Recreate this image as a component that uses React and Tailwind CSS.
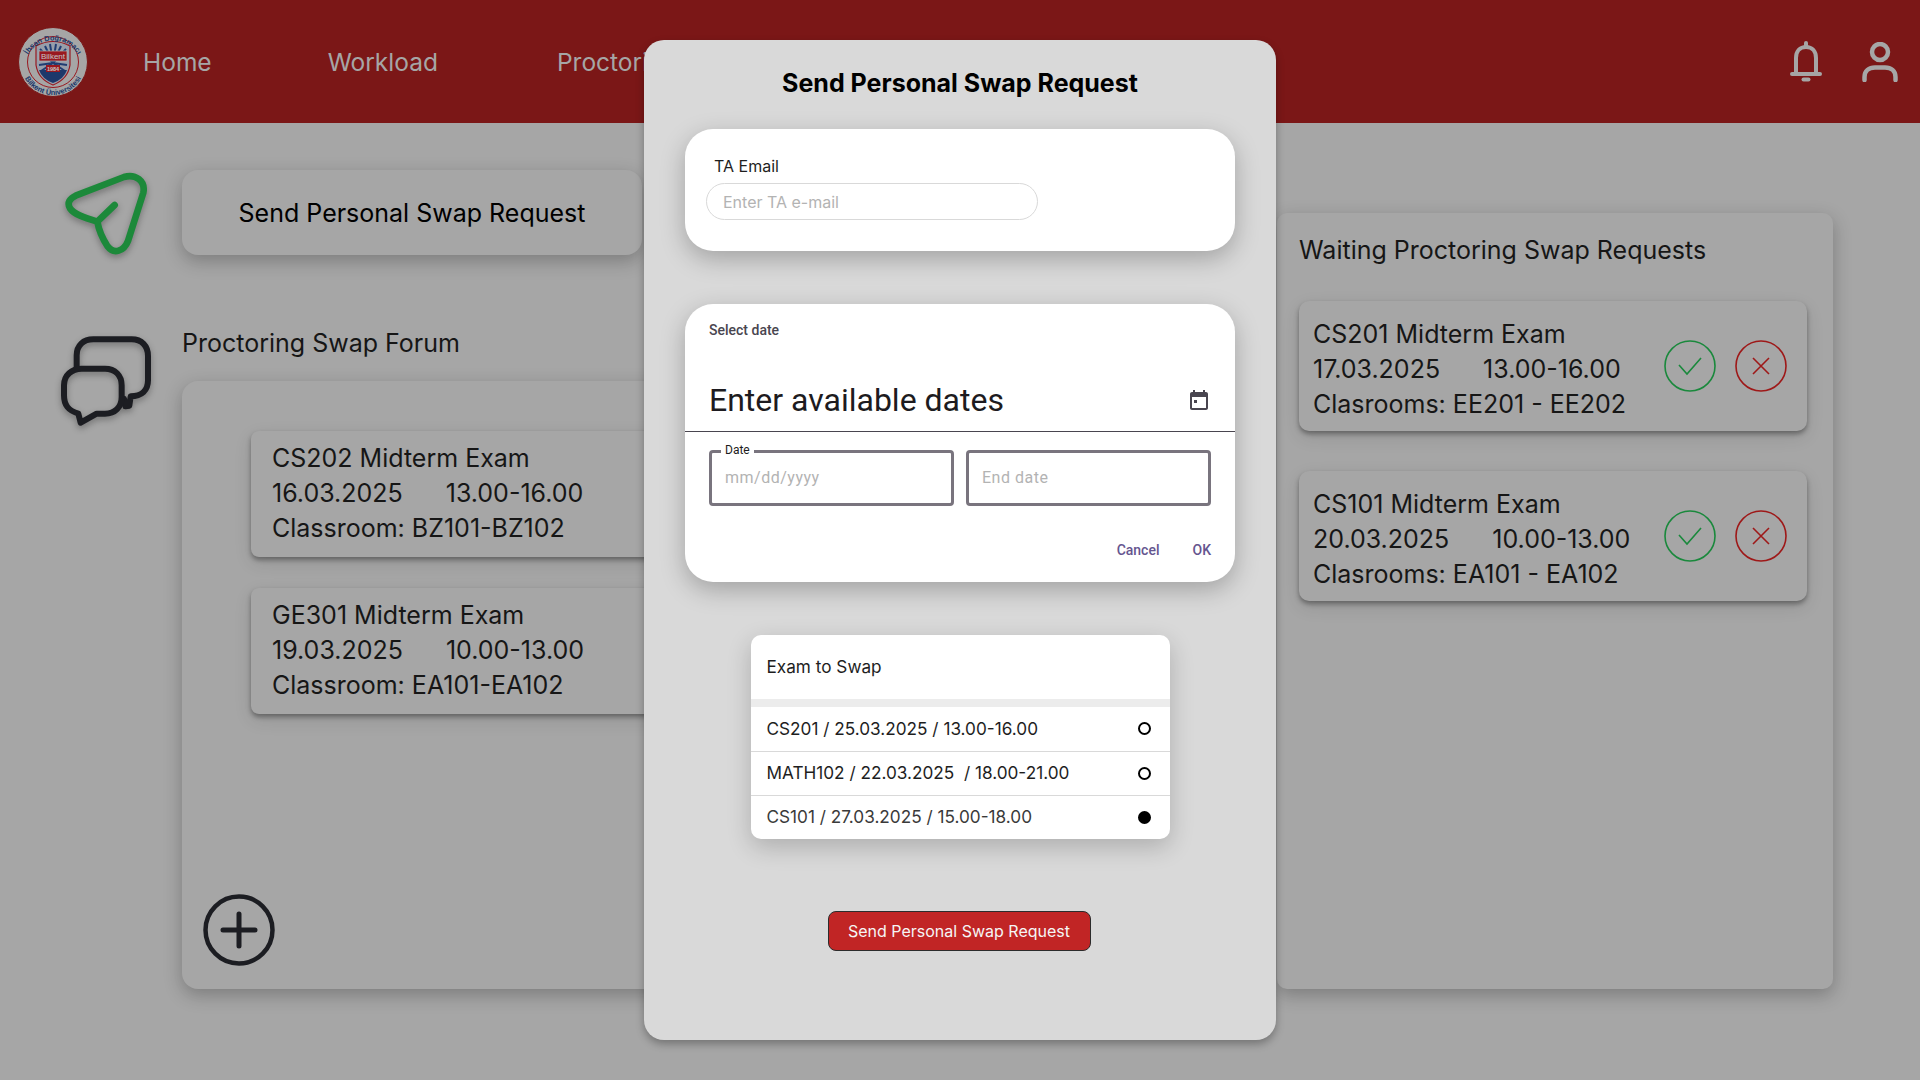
import React from "react";

const forumItems = [
  { title: "CS202 Midterm Exam", date: "16.03.2025", time: "13.00-16.00", room: "Classroom: BZ101-BZ102" },
  { title: "GE301 Midterm Exam", date: "19.03.2025", time: "10.00-13.00", room: "Classroom: EA101-EA102" },
];

const waitingItems = [
  { title: "CS201 Midterm Exam", date: "17.03.2025", time: "13.00-16.00", room: "Clasrooms: EE201 - EE202" },
  { title: "CS101 Midterm Exam", date: "20.03.2025", time: "10.00-13.00", room: "Clasrooms: EA101 - EA102" },
];

const exams = [
  { label: "CS201 / 25.03.2025 / 13.00-16.00", selected: false },
  { label: "MATH102 / 22.03.2025  / 18.00-21.00", selected: false },
  { label: "CS101 / 27.03.2025 / 15.00-18.00", selected: true },
];

const Logo = () => (
  <svg width="70" height="70" viewBox="0 0 70 70">
    <defs>
      <path id="logoTop" d="M6.5 38 A28.8 28.8 0 0 1 63.5 38" />
      <path id="logoBottom" d="M3 36 A32 32 0 0 0 67 36" />
    </defs>
    <circle cx="35" cy="35" r="34.5" fill="#d9d9d9" stroke="#a11f1f" strokeWidth="1" />
    <circle cx="35" cy="35" r="25.5" fill="#d9d9d9" stroke="#c8202a" strokeWidth="1" />
    <path d="M18 19 Q35 10 52 19 V38 Q50 52 35 58 Q20 52 18 38 Z" fill="#c6cfdf" stroke="#c8202a" strokeWidth="1.2" />
    <path d="M22 22 L35 36 M27 19 L35 36 M32 17 L35 36 M38 17 L35 36 M43 19 L35 36 M48 22 L35 36 M21 38 L35 36 M49 38 L35 36 M23 44 L35 36 M47 44 L35 36" stroke="#2a4f96" strokeWidth="2" />
    <path d="M21 43 H49 Q46 52 35 56 Q24 52 21 43 Z" fill="#264a8c" />
    <rect x="21" y="24" width="28" height="10" fill="#c8202a" stroke="#e6e6e6" strokeWidth="0.7" />
    <text x="35" y="32" textAnchor="middle" fontSize="8" fontFamily="Liberation Sans, sans-serif" fill="#ffffff">Bilkent</text>
    <rect x="28" y="38" width="14" height="7" fill="#c8202a" />
    <text x="35" y="44" textAnchor="middle" fontSize="5.5" fontWeight="700" fontFamily="Liberation Sans, sans-serif" fill="#ffffff">1984</text>
    <text fontSize="7.4" fontWeight="700" fontFamily="Liberation Sans, sans-serif" fill="#264a8c">
      <textPath href="#logoTop" startOffset="50%" textAnchor="middle">İhsan Doğramacı</textPath>
    </text>
    <text fontSize="7.4" fontWeight="700" fontFamily="Liberation Sans, sans-serif" fill="#264a8c">
      <textPath href="#logoBottom" startOffset="50%" textAnchor="middle">Bilkent Üniversitesi</textPath>
    </text>
  </svg>
);

const BellIcon = () => (
  <svg width="32" height="41" viewBox="0 0 32 41" fill="none" stroke="#d9d9d9" strokeWidth="4" strokeLinecap="round">
    <path d="M6 33 V17 C6 10 10 6 16 6 C22 6 26 10 26 17 V33" />
    <path d="M2 33 H30" />
    <path d="M16 2 V5" />
    <path d="M13.5 38.5 H18.5" />
  </svg>
);

const UserIcon = () => (
  <svg width="36" height="40" viewBox="0 0 36 40" fill="none" stroke="#d9d9d9" strokeWidth="4.5" strokeLinecap="round">
    <circle cx="18" cy="10" r="8" />
    <path d="M2.5 38 V35 C2.5 29 7 25.5 13 25.5 H23 C29 25.5 33.5 29 33.5 35 V38" />
  </svg>
);

const SendIcon = () => (
  <svg width="85" height="85" viewBox="70 60 255 255" fill="none" stroke="#25b34c" strokeWidth="20" strokeLinecap="round" strokeLinejoin="round" className="drop-shadow-[0_3px_3px_rgba(0,0,0,0.3)]">
    <path d="M170 212 C130 200 100 190 88 172 C78 155 88 142 105 134 L250 78 C285 68 315 90 308 125 L262 270 C250 300 220 312 200 285 C185 262 175 240 170 212 Z" />
    <path d="M170 212 L222 162" />
  </svg>
);

const ChatIcon = () => (
  <svg width="90" height="90" viewBox="63 557 270 270" fill="none" stroke="#25262d" strokeWidth="18" strokeLinecap="round" strokeLinejoin="round" className="drop-shadow-[0_3px_3px_rgba(0,0,0,0.3)]">
    <path d="M110 650 V615 C110 585 130 567 160 567 H275 C305 567 324 587 324 617 V690 C324 720 305 738 272 738 L268 766 L256 768 L252 745" />
    <path d="M125 655 H195 C225 655 245 675 245 705 V740 C245 770 225 790 195 790 H170 L122 817 L115 790 C85 780 72 765 72 735 V705 C72 675 95 655 125 655 Z" />
  </svg>
);

const PlusIcon = () => (
  <svg width="72" height="72" viewBox="0 0 72 72" fill="none" stroke="#25262d" strokeLinecap="round">
    <circle cx="36" cy="36" r="33.5" strokeWidth="4.5" />
    <path d="M20 36 H52 M36 20 V52" strokeWidth="5" />
  </svg>
);

const CheckButton = () => (
  <svg width="52" height="52" viewBox="0 0 52 52" fill="none" stroke="#22b34f" strokeWidth="1.6">
    <circle cx="26" cy="26" r="25" />
    <path d="M15 25 L23 34 L37 18" />
  </svg>
);

const CrossButton = () => (
  <svg width="52" height="52" viewBox="0 0 52 52" fill="none" stroke="#cf2020" strokeWidth="1.6">
    <circle cx="26" cy="26" r="25" />
    <path d="M18 18 L34 34 M34 18 L18 34" />
  </svg>
);

const CalendarIcon = () => (
  <svg width="24" height="24" viewBox="0 0 24 24" fill="#49454f" className="mt-[2px]">
    <path d="M19 3h-1V1h-2v2H8V1H6v2H5c-1.11 0-1.99.9-1.99 2L3 19c0 1.1.89 2 2 2h14c1.1 0 2-.9 2-2V5c0-1.1-.9-2-2-2zm0 16H5V8h14v11zM7 11h3v3H7z" />
  </svg>
);

const ExamLines = ({ item }) => (
  <div className="text-[25px] leading-[35px] text-[#1e1e1e]">
    <div>{item.title}</div>
    <div className="flex gap-[43px]">
      <span>{item.date}</span>
      <span>{item.time}</span>
    </div>
    <div>{item.room}</div>
  </div>
);

const Background = () => (
  <div className="flex flex-col h-[1080px]">
    {/* Top bar */}
    <header className="flex items-center h-[123px] bg-[#a11f1f] pl-[18px] pr-[22px] shrink-0 text-[24.5px] text-[#d9d9d9]">
      <Logo />
      <nav className="flex gap-[116px] ml-[55px] pt-[2px]">
        <span>Home</span>
        <span>Workload</span>
        <span className="ml-[3px]">Proctoring</span>
      </nav>
      <div className="flex items-center gap-[40px] ml-auto">
        <BellIcon />
        <UserIcon />
      </div>
    </header>

    <main className="flex justify-between pl-[61px] pr-[87px] flex-1">
      <div className="flex flex-col">
        {/* Send personal swap */}
        <div className="flex mt-[47px]">
          <div className="w-[121px] pl-[3px] pt-[1px]">
            <SendIcon />
          </div>
          <div className="flex items-center justify-center w-[460px] h-[85px] pt-[2px] rounded-[16px] bg-[#d9d9d9] shadow-[0_6px_18px_rgba(0,0,0,0.25)] text-[25px] text-black">
            Send Personal Swap Request
          </div>
        </div>

        {/* Forum */}
        <div className="flex mt-[72px]">
          <div className="w-[121px] pt-[8px]">
            <ChatIcon />
          </div>
          <div className="flex flex-col">
            <div className="h-[30px] text-[25px] leading-[30px] text-[#1e1e1e]">Proctoring Swap Forum</div>
            <div className="flex flex-col w-[520px] h-[608px] mt-[23px] pl-[69px] pt-[50px] rounded-[16px] bg-[#d9d9d9] shadow-[0_6px_18px_rgba(0,0,0,0.25)]">
              <div className="flex flex-col gap-[31px]">
                {forumItems.map((item) => (
                  <div key={item.title} className="w-[420px] h-[126px] pl-[21px] pt-[10px] rounded-[8px] bg-[#d9d9d9] shadow-[0_3px_5px_rgba(0,0,0,0.35),0_6px_18px_rgba(0,0,0,0.1)]">
                    <ExamLines item={item} />
                  </div>
                ))}
              </div>
              <div className="mt-auto mb-[23px] ml-[-48px]">
                <PlusIcon />
              </div>
            </div>
          </div>
        </div>
      </div>

      {/* Waiting requests */}
      <aside className="flex flex-col w-[556px] h-[776px] mt-[90px] pl-[22px] rounded-[10px] bg-[#d9d9d9] shadow-[0_6px_18px_rgba(0,0,0,0.25)]">
        <div className="mt-[22px] h-[30px] text-[25px] leading-[30px] text-[#1e1e1e]">Waiting Proctoring Swap Requests</div>
        <div className="flex flex-col gap-[40px] mt-[36px]">
          {waitingItems.map((item) => (
            <div key={item.title} className="flex items-center w-[508px] h-[130px] pl-[14px] pr-[20px] rounded-[10px] bg-[#d9d9d9] shadow-[0_3px_5px_rgba(0,0,0,0.35),0_6px_18px_rgba(0,0,0,0.1)]">
              <div className="pt-[7px]">
                <ExamLines item={item} />
              </div>
              <div className="flex gap-[19px] ml-auto">
                <CheckButton />
                <CrossButton />
              </div>
            </div>
          ))}
        </div>
      </aside>
    </main>
  </div>
);

const Modal = () => (
  <div className="absolute left-[644px] top-[40px] flex flex-col items-center w-[632px] h-[1000px] rounded-[20px] bg-[#d9d9d9] shadow-[0_4px_8px_rgba(0,0,0,0.3)]">
    <h2 className="mt-[29px] text-[25px] leading-[29px] font-bold text-black">Send Personal Swap Request</h2>

    {/* TA email */}
    <div className="w-[550px] h-[122px] mt-[31px] pt-[28px] pl-[21px] rounded-[28px] bg-white shadow-[0_8px_24px_rgba(0,0,0,0.25)]">
      <div className="ml-[8px] text-[16px] leading-[19px] text-[#1e1e1e]">TA Email</div>
      <input
        readOnly
        placeholder="Enter TA e-mail"
        className="block w-[332px] h-[37px] mt-[7px] px-[16px] rounded-full border border-[#d9d9d9] bg-white text-[16px] outline-none placeholder:text-[#b3b3b3]"
      />
    </div>

    {/* Date picker */}
    <div className="flex flex-col w-[550px] h-[278px] mt-[53px] rounded-[28px] bg-white shadow-[0_8px_24px_rgba(0,0,0,0.25)] font-['Roboto',sans-serif]">
      <div className="mt-[16px] ml-[24px] text-[14px] leading-[20px] font-medium text-[#49454f]">Select date</div>
      <div className="flex items-center justify-between h-[40px] mt-[40px] ml-[24px] mr-[24px] text-[32px] leading-[40px] text-[#1d1b20]">
        Enter available dates
        <CalendarIcon />
      </div>
      <div className="h-px mt-[11px] bg-[#49454f]" />
      <div className="flex gap-[12px] mt-[18px] ml-[24px]">
        <div className="relative flex items-center w-[245px] h-[56px] pl-[13px] rounded-[4px] border-[3px] border-[#79747e] text-[16px] tracking-[0.5px] text-[#b3b3b3]">
          <span className="absolute left-[9px] top-[-11px] px-[4px] bg-white text-[12px] leading-[16px] text-[#1d1b20] tracking-normal">Date</span>
          mm/dd/yyyy
        </div>
        <div className="flex items-center w-[245px] h-[56px] pl-[13px] rounded-[4px] border-[3px] border-[#79747e] text-[16px] tracking-[0.5px] text-[#b3b3b3]">
          End date
        </div>
      </div>
      <div className="flex justify-end gap-[33px] mt-[34px] mr-[24px] text-[14px] leading-[20px] font-medium text-[#65558f]">
        <span>Cancel</span>
        <span>OK</span>
      </div>
    </div>

    {/* Exam list */}
    <div className="w-[419px] mt-[53px] rounded-[10px] bg-white overflow-hidden shadow-[0_8px_24px_rgba(0,0,0,0.2)] text-[17.2px]">
      <div className="flex items-center h-[64px] pl-[16px] text-[#1e1e1e]">Exam to Swap</div>
      <div className="h-[8px] bg-[#ececec]" />
      {exams.map((exam, index) => (
        <div key={exam.label} className={`flex items-center justify-between h-[44px] pl-[16px] pr-[19px] pb-[1px] whitespace-pre ${index > 0 ? "border-t border-[#d9d9d9]" : ""} ${exam.selected ? "text-[#3a3a3a]" : "text-[#1e1e1e]"}`}>
          {exam.label}
          <span className={`block w-[13px] h-[13px] rounded-full border-2 border-black ${exam.selected ? "bg-black" : ""}`} />
        </div>
      ))}
    </div>

    <button className="w-[263px] h-[40px] mt-[72px] mr-[2px] rounded-[8px] border border-[#2c2c2c] bg-[#c12525] text-[16px] text-[#f5f5f5]">
      Send Personal Swap Request
    </button>
  </div>
);

export default function App() {
  return (
    <div className="relative w-[1920px] h-[1080px] overflow-hidden bg-[#d9d9d9] font-['Inter',sans-serif]">
      <Background />
      <div className="absolute inset-0 bg-black/[0.235]" />
      <Modal />
    </div>
  );
}
